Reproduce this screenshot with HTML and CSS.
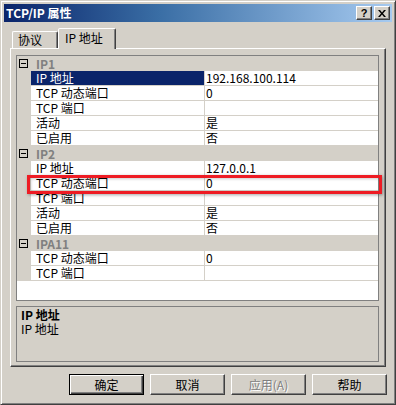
FILE: index.html
```html
<!DOCTYPE html>
<html lang="zh-CN">
<head>
    <meta charset="UTF-8">
    <title>TCP/IP 属性</title>
    <link rel="stylesheet" href="styles.css">
</head>
<body>

<div class="window">
    <div class="titlebar">
        <span class="title">TCP/IP 属性</span>
        <div class="caption-btns">
            <span class="cap-btn help">?</span>
            <span class="cap-btn">
                <svg width="8" height="7" viewBox="0 0 8 7">
                    <path d="M0 0h2l2 2.5L6 0h2L5 3.5 8 7H6L4 4.5 2 7H0l3-3.5z" fill="#000"/>
                </svg>
            </span>
        </div>
    </div>

    <div class="body">
        <div class="tabs">
            <div class="tab">协议</div>
            <div class="tab active">IP 地址</div>
        </div>

        <div class="panel">
            <div class="grid">
                <div class="cat"><span class="toggle"></span><span class="cat-name">IP1</span></div>
                <div class="row selected"><span class="gutter"></span><span class="name">IP 地址</span><span class="value">192.168.100.114</span></div>
                <div class="row"><span class="gutter"></span><span class="name">TCP 动态端口</span><span class="value">0</span></div>
                <div class="row"><span class="gutter"></span><span class="name">TCP 端口</span><span class="value"></span></div>
                <div class="row"><span class="gutter"></span><span class="name">活动</span><span class="value">是</span></div>
                <div class="row"><span class="gutter"></span><span class="name">已启用</span><span class="value">否</span></div>

                <div class="cat"><span class="toggle"></span><span class="cat-name">IP2</span></div>
                <div class="row"><span class="gutter"></span><span class="name">IP 地址</span><span class="value">127.0.0.1</span></div>
                <div class="row"><span class="gutter"></span><span class="name">TCP 动态端口</span><span class="value">0</span></div>
                <div class="row"><span class="gutter"></span><span class="name">TCP 端口</span><span class="value"></span></div>
                <div class="row"><span class="gutter"></span><span class="name">活动</span><span class="value">是</span></div>
                <div class="row"><span class="gutter"></span><span class="name">已启用</span><span class="value">否</span></div>

                <div class="cat"><span class="toggle"></span><span class="cat-name">IPA11</span></div>
                <div class="row"><span class="gutter"></span><span class="name">TCP 动态端口</span><span class="value">0</span></div>
                <div class="row"><span class="gutter"></span><span class="name">TCP 端口</span><span class="value"></span></div>
            </div>

            <div class="desc">
                <div class="desc-title">IP 地址</div>
                <div class="desc-text">IP 地址</div>
            </div>
        </div>

        <div class="buttons">
            <button class="btn default">确定</button>
            <button class="btn">取消</button>
            <button class="btn disabled">应用(A)</button>
            <button class="btn">帮助</button>
        </div>
    </div>

    <div class="highlight"></div>
</div>

</body>
</html>
```

FILE: styles.css
```css
body {
    margin: 0;
    font-family: "Noto Sans CJK SC", "Liberation Sans", sans-serif;
    font-size: 12px;
    background-color: #d4d0c8;
}

.window {
    position: relative;
    width: 396px;
    height: 405px;
    box-sizing: border-box;
    padding: 3px;
    border: 1px solid;
    border-color: #d4d0c8 #404040 #404040 #d4d0c8;
    box-shadow: inset 1px 1px #fff, inset -1px -1px #808080;
    background-color: #d4d0c8;
    display: flex;
    flex-direction: column;
}

.titlebar {
    height: 18px;
    display: flex;
    align-items: center;
    justify-content: space-between;
    padding: 0 2px 0 2px;
    background: linear-gradient(to right, #0a246a, #3a6ea5 40%, #a6caf0);
}

.title {
    color: #fff;
    font-weight: bold;
    line-height: 18px;
}

.caption-btns {
    display: flex;
    gap: 2px;
}

.cap-btn {
    width: 16px;
    height: 14px;
    box-sizing: border-box;
    background-color: #d4d0c8;
    border: 1px solid;
    border-color: #fff #404040 #404040 #fff;
    box-shadow: inset -1px -1px #808080;
    display: flex;
    align-items: center;
    justify-content: center;
    font-family: "Liberation Sans", sans-serif;
    font-weight: bold;
    font-size: 11px;
    line-height: 12px;
    color: #000;
}

.body {
    flex: 1;
    padding: 0 6px 6px;
    display: flex;
    flex-direction: column;
}

.tabs {
    height: 20px;
    margin-top: 6px;
    padding-left: 2px;
    display: flex;
    align-items: flex-end;
    position: relative;
    z-index: 1;
}

.tab {
    width: 46px;
    height: 17px;
    box-sizing: border-box;
    padding-left: 5px;
    border: 1px solid;
    border-bottom: none;
    border-color: #fff #404040 transparent #fff;
    border-radius: 2px 2px 0 0;
    box-shadow: inset -1px 0 #808080;
    line-height: 16px;
}

.tab.active {
    width: 58px;
    height: 21px;
    margin-bottom: -1px;
    padding-left: 6px;
    background-color: #d4d0c8;
    line-height: 18px;
}

.panel {
    height: 319px;
    box-sizing: border-box;
    border: 1px solid;
    border-color: #fff #404040 #404040 #fff;
    box-shadow: inset -1px -1px #808080;
    padding: 6px 6px 0 5px;
    display: flex;
    flex-direction: column;
}

.grid {
    height: 246px;
    box-sizing: border-box;
    border: 1px solid #808080;
    background-color: #fff;
}

.cat {
    height: 15px;
    background-color: #d4d0c8;
    display: flex;
    align-items: center;
}

.toggle {
    width: 9px;
    height: 9px;
    box-sizing: border-box;
    margin-left: 2px;
    border: 1px solid #000;
    background: linear-gradient(#000, #000) center / 5px 1px no-repeat;
}

.cat-name {
    margin-left: 8px;
    color: #808080;
    font-weight: bold;
    line-height: 15px;
}

.row {
    display: grid;
    grid-template-columns: 14px 173px 1fr;
    height: 15px;
}

.gutter {
    background-color: #d4d0c8;
}

.name,
.value {
    border-bottom: 1px solid #d4d0c8;
    line-height: 14px;
    white-space: nowrap;
}

.name {
    padding-left: 5px;
}

.value {
    border-left: 1px solid #d4d0c8;
    padding-left: 1px;
}

.row.selected .name {
    background-color: #0a246a;
    color: #fff;
}

.desc {
    height: 56px;
    margin-top: 5px;
    box-sizing: border-box;
    border: 1px solid #808080;
    padding: 1px 4px;
    line-height: 14px;
}

.desc-title {
    font-weight: bold;
}

.buttons {
    margin-top: 7px;
    margin-right: -1px;
    display: flex;
    justify-content: flex-end;
    gap: 6px;
}

.btn {
    width: 75px;
    height: 21px;
    box-sizing: border-box;
    padding: 0;
    font-family: inherit;
    font-size: 12px;
    color: #000;
    background-color: #d4d0c8;
    border: 1px solid;
    border-color: #fff #404040 #404040 #fff;
    box-shadow: inset -1px -1px #808080;
    border-radius: 0;
}

.btn.default {
    border-color: #000;
    box-shadow: inset 1px 1px #fff, inset -1px -1px #404040, inset -2px -2px #808080;
}

.btn.disabled {
    color: #808080;
    text-shadow: 1px 1px #fff;
}

.highlight {
    position: absolute;
    left: 26px;
    top: 174px;
    width: 355px;
    height: 19px;
    box-sizing: border-box;
    border: 3px solid #ee1c24;
    box-shadow: 1px 1px 3px rgba(0, 0, 0, 0.35), inset 1px 1px 3px rgba(0, 0, 0, 0.2);
}
```
